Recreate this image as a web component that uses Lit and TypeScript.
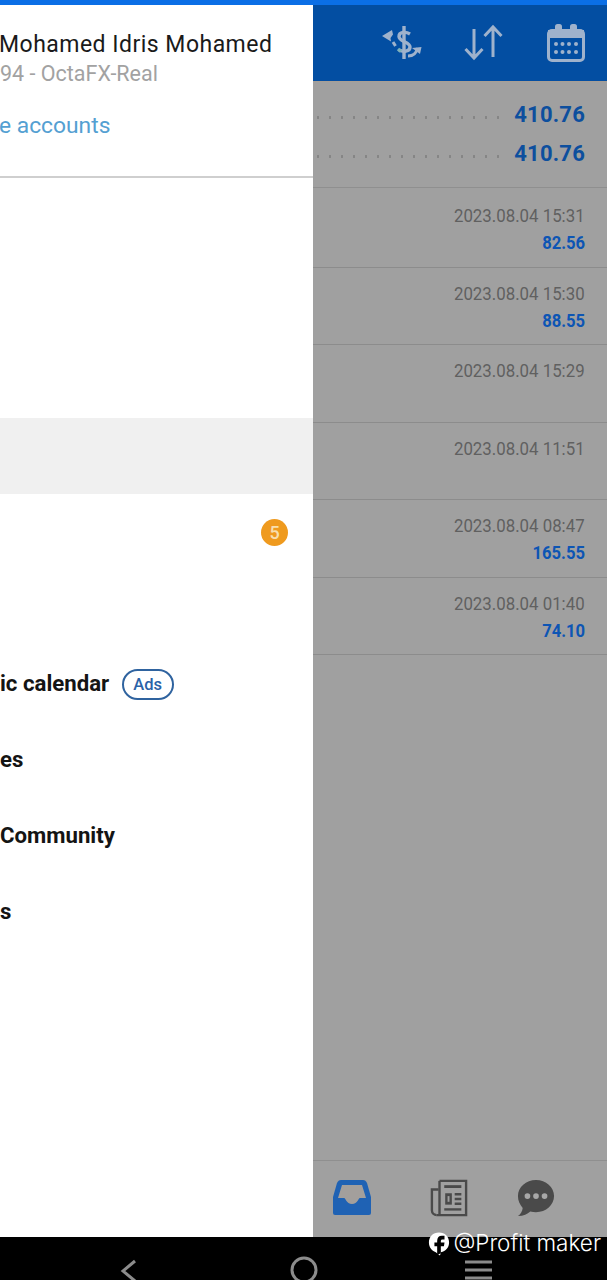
import { LitElement, html, css, svg } from "lit";
import { customElement } from "lit/decorators.js";

const trades = [
  { date: "2023.08.04 15:31", value: "82.56" },
  { date: "2023.08.04 15:30", value: "88.55" },
  { date: "2023.08.04 15:29", value: "" },
  { date: "2023.08.04 11:51", value: "" },
  { date: "2023.08.04 08:47", value: "165.55" },
  { date: "2023.08.04 01:40", value: "74.10" },
];

const exchangeIcon = svg`<svg class="hicon" viewBox="0 0 40 40" fill="none" stroke="#9fb2cc" stroke-linecap="butt">
  <path d="M28 11c-4-2.500-11-2.500-11 2.500 0 5.500 11 5 11 10.500 0 5-7 5-11 3" stroke-width="3.400"/>
  <path d="M22 3v33" stroke-width="3.400"/>
  <path d="M16 26l3 2.500" stroke-width="3.500" stroke="#7fb0b8"/>
  <path d="M10 7L0 13l9 5.500-.5-3.500 2.500-3.500z" fill="#9fb2cc" stroke="none"/>
  <path d="M11 19l2.500 4" stroke-width="3"/>
  <path d="M26 33c5 0 8.500-3 9.500-8" stroke-width="3"/><path d="M30 25l9.500-1L38 31z" fill="#9fb2cc" stroke="none"/>
</svg>`;
const arrowsIcon = svg`<svg class="hicon" viewBox="0 0 40 40" fill="none" stroke="#9fb2cc" stroke-width="3">
  <path d="M10 6v29M1.500 26l8.500 9 8.500-9"/><path d="M29 34V4M20.500 13L29 4l8.500 9"/>
</svg>`;
const calendarIcon = svg`<svg class="hicon" viewBox="0 0 40 40" fill="none">
  <rect x="2.500" y="7.500" width="35" height="30" rx="3.500" stroke="#9fb2cc" stroke-width="3"/>
  <rect x="2" y="7" width="36" height="8" fill="#9fb2cc"/>
  <rect x="9" y="1" width="7" height="9" rx="2.500" fill="#9fb2cc"/><rect x="24" y="1" width="7" height="9" rx="2.500" fill="#9fb2cc"/>
  <g fill="#9fb2cc"><circle cx="10" cy="21" r="2"/><circle cx="16.500" cy="21" r="2"/><circle cx="23" cy="21" r="2"/><circle cx="30" cy="21" r="2"/>
  <circle cx="10" cy="29" r="2"/><circle cx="16.500" cy="29" r="2"/><circle cx="23" cy="29" r="2"/><circle cx="30" cy="29" r="2"/></g>
</svg>`;
const inboxIcon = svg`<svg class="nicon" viewBox="0 0 40 38">
  <path d="M9 1h22c2 0 3 1 4 3l4 14v16a2 2 0 0 1-2 2H3a2 2 0 0 1-2-2V18L5 4c1-2 2-3 4-3z" fill="#1f62b4"/>
  <path d="M10 6h20l4 13h-6c-2 0-2 6-8 6s-6-6-8-6H6z" fill="#a39f9c"/>
</svg>`;
const newsIcon = svg`<svg class="nicon" viewBox="0 0 40 40" fill="none" stroke="#4a4a4a" stroke-width="2.500">
  <path d="M10 2h28v36H7"/><path d="M10 2v36"/><path d="M9 11H2v22a5 5 0 0 0 5 5"/>
  <path d="M15 8h18" stroke-width="3"/><rect x="16" y="15" width="7" height="12" fill="#4a4a4a" stroke="none"/>
  <rect x="18.500" y="18" width="2" height="6" fill="#a0a0a0" stroke="none"/>
  <path d="M26 16h7M26 21h7M26 26h7" stroke-width="2.500"/><path d="M15 32h18" stroke-width="2.500"/>
</svg>`;
const chatIcon = svg`<svg class="nicon" viewBox="0 0 40 40">
  <path d="M20 1c10.500 0 19 7.500 19 17s-8.500 17-19 17c-2 0-4-.3-6-.8C11 37 7 39 1 39c3-2 4.500-5 5-8.500C3 27 1 23 1 18 1 8.500 9.500 1 20 1z" fill="#4a4a4a"/>
  <circle cx="11" cy="18" r="3" fill="#a8a8a8"/><circle cx="20" cy="18" r="3" fill="#a8a8a8"/><circle cx="29" cy="18" r="3" fill="#a8a8a8"/>
</svg>`;
const fbIcon = svg`<svg class="fb" viewBox="0 0 24 26">
  <path d="M12 1C5.500 1 1 5.500 1 12c0 5 3 9 7.500 10.500L13 26c.5-1 .8-2 1-3.500C19.500 21.500 23 17.500 23 12 23 5.500 18.500 1 12 1z" fill="#fff"/>
  <path d="M10 25V16H7v-4h3V10c0-3.500 2-5.500 5-5.500h3v4h-2c-1.500 0-2 .6-2 2V12h4l-.6 4H14v8z" fill="#000"/>
</svg>`;

@customElement("app-root")
export class AppRoot extends LitElement {
  static styles = css`
    :host { display: block; width: 607px; height: 1280px; overflow: hidden; position: relative; font-family: Roboto, sans-serif; background: #a0a0a0; }
    .strip { height: 5px; background: #0b6fe6; }
    .main { display: grid; grid-template-columns: 313px 294px; height: 1232px; }

    .drawer { background: #fff; display: flex; flex-direction: column; overflow: hidden; white-space: nowrap; }
    .account { height: 173px; box-sizing: border-box; border-bottom: 2px solid #cfcfcf; padding-top: 26px; display: flex; flex-direction: column; }
    .name { font-size: 23px; line-height: 28px; letter-spacing: .48px; margin-left: -1px; color: #1a1a1a; }
    .server { font-size: 21.500px; line-height: 30px; color: #a2a2a2; }
    .manage { font-size: 22.800px; line-height: 28px; margin-top: 23px; margin-left: -1px; color: #54a0d2; }
    .menu { padding-top: 240px; display: flex; flex-direction: column; }
    .item { height: 76px; flex: none; display: flex; align-items: center; padding-bottom: 2px; box-sizing: border-box; font-size: 22.200px; font-weight: 700; color: #141414; }
    .item.sel { background: #f0f0f0; }
    .item.badged { justify-content: flex-end; padding-right: 25px; padding-bottom: 0; }
    .badge { width: 27px; height: 27px; border-radius: 50%; background: #ef9a1e; color: #f8dfae; font-size: 18px; font-weight: 500; display: flex; align-items: center; justify-content: center; }
    .ads { margin-left: 12.500px; width: 52px; height: 31px; margin-top: 2px; box-sizing: border-box; border: 2px solid #2f639f; border-radius: 16px; color: #2a62a8; font-size: 16.500px; font-weight: 500; display: flex; align-items: center; justify-content: center; }

    .side { display: flex; flex-direction: column; background: #a0a0a0; min-height: 0; }
    .head { height: 76px; flex: none; background: #034ea2; display: flex; justify-content: flex-end; align-items: center; gap: 42px; padding-right: 21px; }
    .hicon { width: 40px; height: 40px; }
    .summary { height: 107px; flex: none; box-sizing: border-box; border-top: 1px solid #a89f95; border-bottom: 1px solid #8f8f8f; padding: 13px 22px 0 0; display: flex; flex-direction: column; }
    .sumrow { height: 39px; display: flex; align-items: center; gap: 14px; }
    .dots { flex: 1; height: 3px; margin-top: 5px; background-image: radial-gradient(circle, #858585 1.100px, transparent 1.500px); background-size: 12px 3px; background-position: -1px 0; }
    .sumval { font-size: 22px; font-weight: 700; letter-spacing: .2px; color: #0d4f9e; }
    .rows { flex: 1; }
    .row { height: 77.500px; box-sizing: border-box; border-bottom: 1px solid #8c8c8c; padding: 13px 22px 0 0; display: flex; flex-direction: column; align-items: flex-end; }
    .row:first-child { height: 79.500px; padding-top: 15px; }
    .date, .val { transform-origin: right center; }
    .date { font-size: 18.500px; line-height: 27px; color: #606060; transform: scaleX(.91); }
    .val { font-size: 19px; line-height: 26px; font-weight: 700; color: #0d55b4; transform: scaleX(.875); }
    .bottom { height: 77px; flex: none; box-sizing: border-box; border-top: 1px solid #8f8f8f; display: grid; grid-template-columns: 78px 116px 58px; align-items: center; justify-items: center; padding-bottom: 2px; }
    .nicon { width: 40px; height: 38px; }

    .nav { height: 43px; background: #000; position: relative; }
    .navsvg { width: 607px; height: 43px; display: block; }
    .mark { position: absolute; right: 6px; top: -9px; display: flex; align-items: center; gap: 3px; color: #fff; font-family: Inter, sans-serif; font-weight: 300; font-size: 22.500px; line-height: 30px; white-space: nowrap; }
    .fb { width: 22px; height: 25px; }
  `;

  render() {
    return html`
      <div class="strip"></div>
      <div class="main">
        <div class="drawer">
          <div class="account">
            <div class="name">Mohamed Idris Mohamed</div>
            <div class="server">94 - OctaFX-Real</div>
            <div class="manage">e accounts</div>
          </div>
          <div class="menu">
            <div class="item sel"></div>
            <div class="item badged"><span class="badge">5</span></div>
            <div class="item"></div>
            <div class="item">ic calendar<span class="ads">Ads</span></div>
            <div class="item">es</div>
            <div class="item">Community</div>
            <div class="item">s</div>
          </div>
        </div>
        <div class="side">
          <div class="head">${exchangeIcon}${arrowsIcon}${calendarIcon}</div>
          <div class="summary">
            <div class="sumrow"><span class="dots"></span><span class="sumval">410.76</span></div>
            <div class="sumrow"><span class="dots"></span><span class="sumval">410.76</span></div>
          </div>
          <div class="rows">
            ${trades.map(
              (t) => html`<div class="row"><div class="date">${t.date}</div>${t.value ? html`<div class="val">${t.value}</div>` : ""}</div>`
            )}
          </div>
          <div class="bottom">${inboxIcon}${newsIcon}${chatIcon}</div>
        </div>
      </div>
      <div class="nav">
        <svg class="navsvg" viewBox="0 0 607 43" fill="none" stroke="#8c8c8c">
          <path d="M135 24l-12 10 12 10" stroke-width="3"/>
          <circle cx="304" cy="33" r="12" stroke-width="3"/>
          <path d="M465 25h27M465 33h27M465 41h27" stroke-width="3"/>
        </svg>
        <div class="mark">${fbIcon}<span>@Profit maker</span></div>
      </div>
    `;
  }
}
